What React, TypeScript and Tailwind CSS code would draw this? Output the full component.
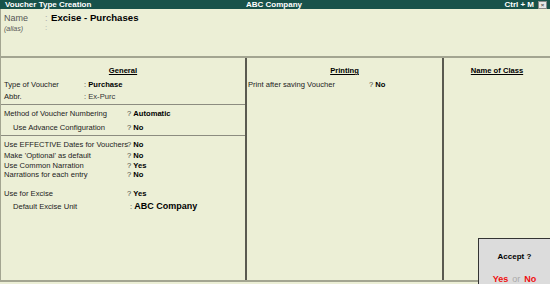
const font = { fontFamily: '"Liberation Sans", Arial, sans-serif' };

type RowProps = {
  label: string;
  mark: string;
  value: string;
  bold?: boolean;
  h: number;
  indent?: boolean;
  labelW?: string;
  big?: boolean;
};

function Row({ label, mark, value, bold = true, h, indent, labelW = "w-[126px]", big }: RowProps) {
  return (
    <div className="flex items-center text-[7.6px] leading-none text-[#222]" style={{ height: h }}>
      <div className={`${labelW} shrink-0 whitespace-nowrap ${indent ? "pl-[12px]" : "pl-[3px]"}`}>{label}</div>
      <div className="whitespace-nowrap">
        <span className="text-[#444]">{mark} </span>
        <span className={`${bold ? "font-bold text-black" : "text-[#333]"} ${big ? "text-[9px]" : ""}`}>{value}</span>
      </div>
    </div>
  );
}

function Heading({ text }: { text: string }) {
  return (
    <div className="pt-[7px] text-center text-[7.6px] leading-[12px]">
      <span className="font-bold text-black underline">{text}</span>
    </div>
  );
}

export default function App() {
  return (
    <div className="relative h-[284px] w-[550px] overflow-hidden bg-[#ecefd6]" style={font}>
      {/* title bar */}
      <div className="flex h-[9px] items-center bg-[#18524a] text-[8px] font-bold leading-[9px] text-white">
        <div className="w-[246px] pl-[5px]">Voucher Type Creation</div>
        <div className="flex-1">ABC Company</div>
        <div className="pr-[4px]">Ctrl + M</div>
        <div className="mr-[3px] flex h-[8px] w-[9px] items-center justify-center border border-[#888] bg-[#e6e6e6] text-[6px] leading-none text-[#555]">×</div>
      </div>

      {/* name header */}
      <div className="h-[49px] border-b-2 border-l border-[#a3a591] pt-[3px]">
        <div className="flex h-[12px] items-center leading-none">
          <div className="w-[44px] pl-[3px] text-[9px] text-[#555]">Name</div>
          <div className="w-[6px] text-[9px] text-[#aaa]">:</div>
          <div className="text-[9.6px] font-bold text-black">Excise - Purchases</div>
        </div>
        <div className="flex h-[8px] items-center leading-none">
          <div className="w-[44px] pl-[3px] text-[7px] italic text-[#555]">(alias)</div>
          <div className="text-[8px] text-[#aaa]">:</div>
        </div>
      </div>

      {/* body */}
      <div className="flex h-[224px] border-b-2 border-l border-[#a3a591]">
        {/* General */}
        <div className="w-[246px] shrink-0 border-r-2 border-[#5a5a50]">
          <Heading text="General" />
          <div className="h-[2px]" />
          <Row label="Type of Voucher" mark=":" value="Purchase" h={12} labelW="w-[83px]" />
          <Row label="Abbr." mark=":" value="Ex-Purc" bold={false} h={12} labelW="w-[83px]" />
          <div className="mt-[1px] border-b border-[#8c8c80]" />
          <div className="h-[3px]" />
          <Row label="Method of Voucher Numbering" mark="?" value="Automatic" h={12} />
          <div className="h-[2px]" />
          <Row label="Use Advance Configuration" mark="?" value="No" h={12} indent />
          <div className="h-[1px]" />
          <div className="border-b border-[#8c8c80]" />
          <div className="h-[3px]" />
          <Row label="Use EFFECTIVE Dates for Vouchers" mark="?" value="No" h={11} />
          <Row label="Make 'Optional' as default" mark="?" value="No" h={11} />
          <Row label="Use Common Narration" mark="?" value="Yes" h={10} />
          <Row label="Narrations for each entry" mark="?" value="No" h={7} />
          <div className="h-[11px]" />
          <Row label="Use for Excise" mark="?" value="Yes" h={10} />
          <div className="h-[1px]" />
          <Row label="Default Excise Unit" mark=":" value="ABC Company" h={13} indent labelW="w-[129px]" big />
        </div>

        {/* Printing */}
        <div className="w-[197px] shrink-0 border-r-2 border-[#5a5a50]">
          <Heading text="Printing" />
          <div className="h-[2px]" />
          <div className="flex h-[12px] items-center text-[7.6px] leading-none text-[#222]">
            <div className="w-[122px] pl-[1px]">Print after saving Voucher</div>
            <div>
              <span className="text-[#444]">? </span>
              <span className="font-bold text-black">No</span>
            </div>
          </div>
        </div>

        {/* Name of Class */}
        <div className="flex-1">
          <Heading text="Name of Class" />
        </div>
      </div>

      {/* accept box */}
      <div className="absolute left-[478px] top-[238px] flex h-[46px] w-[72px] flex-col items-center border-l border-t border-[#333] bg-[#dcdcdc]">
        <div className="mt-[12px] text-[8px] font-bold leading-[12px] text-black">Accept ?</div>
        <div className="mt-[11px] text-[9px] font-bold leading-[10px]">
          <span className="text-[#f01010]">Yes</span>
          <span className="px-[4px] font-normal text-[#aaa]">or</span>
          <span className="text-[#f01010]">No</span>
        </div>
      </div>
    </div>
  );
}
